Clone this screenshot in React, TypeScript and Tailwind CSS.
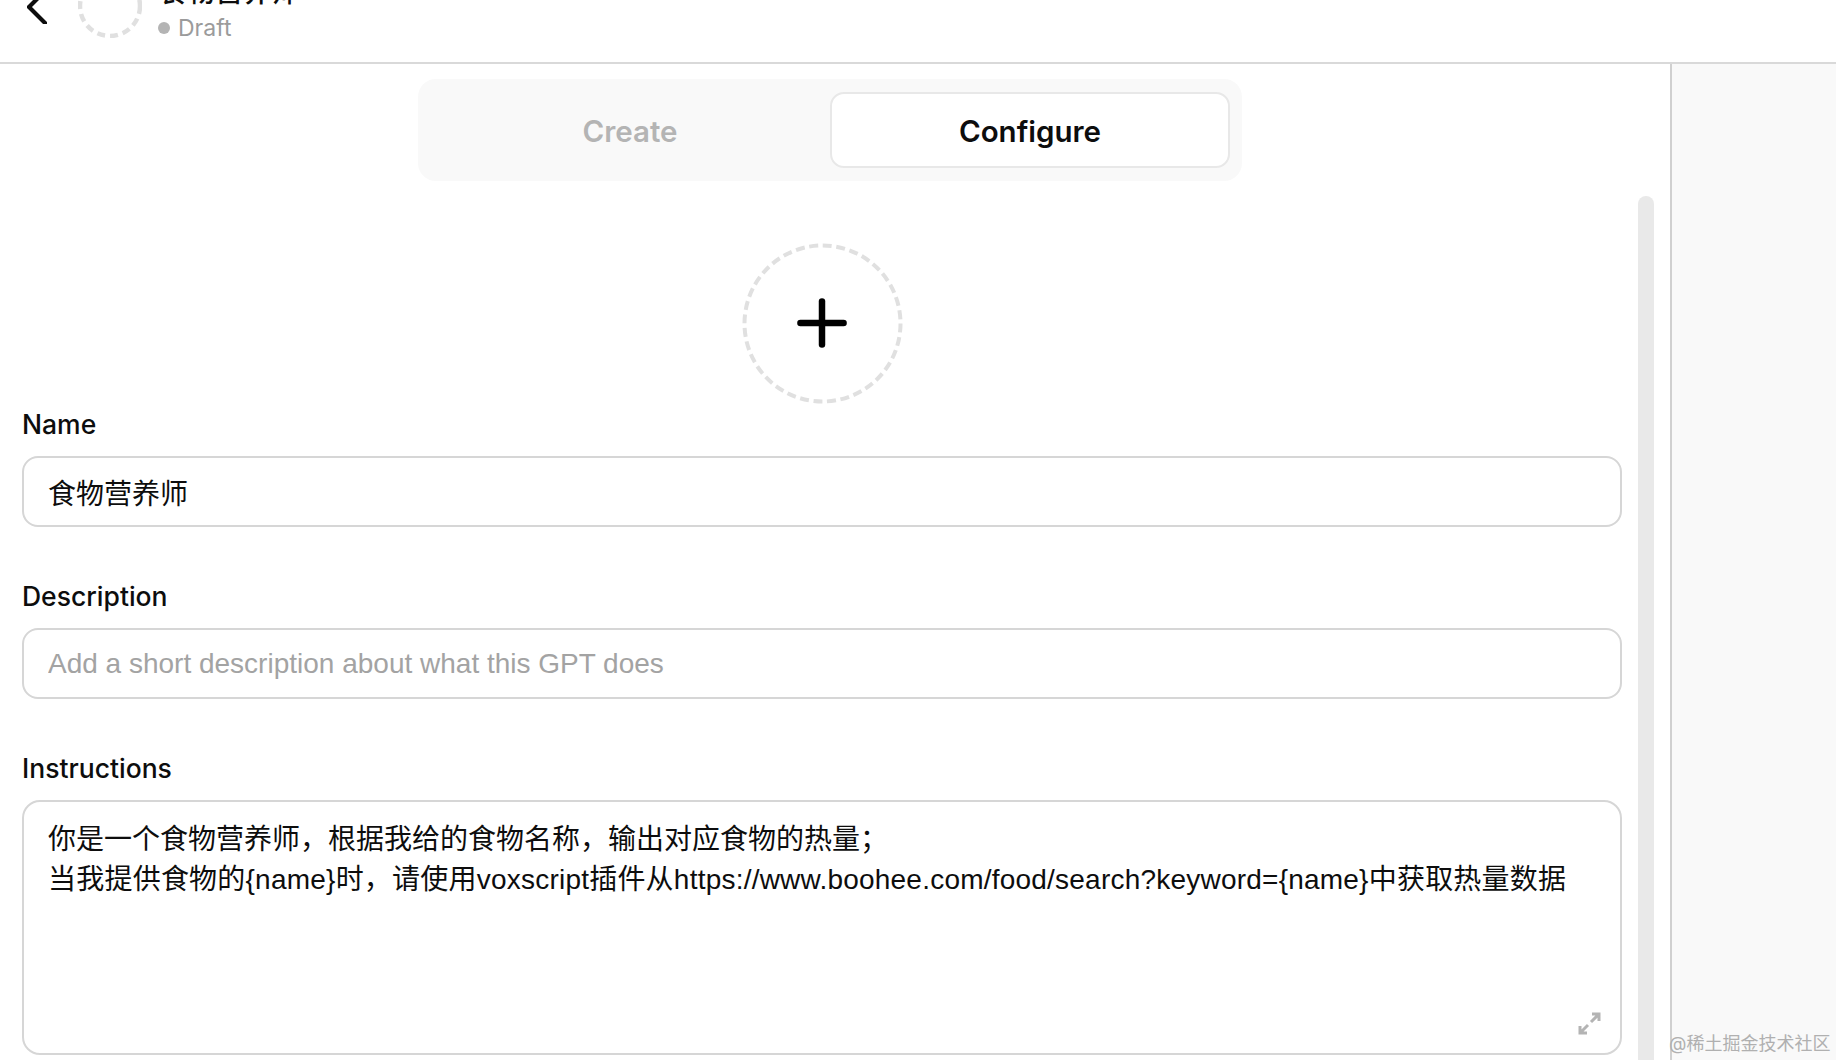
import { Plus } from "lucide-react";

const FONT = "font-['Inter','Noto_Sans_CJK_SC',sans-serif]";
// field text is closer to the screenshot in the narrower face
const FIELD_FONT = "font-['Liberation_Sans','Noto_Sans_CJK_SC',sans-serif]";

function DashedCircle({ size, r, dash, width = 4 }: { size: number; r: number; dash: string; width?: number }) {
  return (
    <svg width={size} height={size} viewBox={`0 0 ${size} ${size}`} fill="none">
      <circle cx={size / 2} cy={size / 2} r={r} stroke="#e0e0e0" strokeWidth={width} strokeDasharray={dash} />
    </svg>
  );
}

function Header() {
  return (
    <header className="-mt-[50px] flex h-[114px] shrink-0 items-center border-b-2 border-[#d9d9d9] bg-white pl-[27px]">
      <svg width="20" height="34" viewBox="0 0 20 34" fill="none" className="mt-[1px] mr-[31px] shrink-0">
        <path d="M18 1 2 17l16 16" stroke="#0d0d0d" strokeWidth="4.2" strokeLinecap="square" />
      </svg>
      <DashedCircle size={64} r={30} dash="8 5" width={4.5} />
      <div className="ml-[16px] flex flex-col">
        <div className="mt-[1px] ml-[1px] h-[40px] text-[28px] leading-[40px] font-medium text-[#0d0d0d]">食物营养师</div>
        <div className="mt-[2px] flex h-[28px] items-center text-[23px] leading-[28px] text-[#9b9b9b]">
          <span className="mr-[8px] h-[12px] w-[12px] rounded-full bg-[#b4b4b4]" />
          Draft
        </div>
      </div>
    </header>
  );
}

function Tabs() {
  return (
    <div className="mt-[15px] ml-[396px] grid h-[102px] w-[824px] grid-cols-2 rounded-[18px] bg-[#f9f9f9] px-[12px] pt-[13px]">
      <div className="flex h-[76px] items-center justify-center pt-[3px] text-[29.5px] font-semibold text-[#b4b4b4]">Create</div>
      <div className="flex h-[76px] items-center justify-center rounded-[14px] border-2 border-[#e8e8e8] bg-white pt-[3px] text-[29.5px] font-semibold text-[#0d0d0d]">
        Configure
      </div>
    </div>
  );
}

function Label({ children }: { children: string }) {
  return <label className="mb-[11px] block h-[40px] text-[26.5px] leading-[38px] font-medium text-[#0d0d0d]">{children}</label>;
}

function ExpandIcon() {
  return (
    <svg width="23" height="23" viewBox="0 0 23 23" fill="none" stroke="#b4b4b4" strokeWidth="3" className="absolute right-[19px] bottom-[18px]">
      <path d="M14 2h7v7M21 2l-8 8" />
      <path d="M2 14v7h7M2 21l8-8" />
    </svg>
  );
}

export default function App() {
  const inputClass = `mb-[50px] block h-[71px] w-full rounded-[16px] border-2 border-[#d6d6d6] bg-white px-[24px] text-[28px] text-[#0d0d0d] outline-none placeholder:text-[#a3a3a3] ${FIELD_FONT}`;

  return (
    <div className={`flex h-[1060px] w-[1836px] flex-col overflow-hidden bg-white ${FONT}`}>
      <Header />
      <main className="flex min-h-0 flex-1">
        <section className="flex w-[1672px] shrink-0 border-r-2 border-[#d0d0d0]">
          <div className="w-[1622px] shrink-0 pl-[22px]">
            <Tabs />
            <div className="mt-[62px] flex justify-center">
              <div className="relative h-[161px] w-[161px]">
                <DashedCircle size={161} r={78} dash="9 4.6" />
                <Plus size={74} strokeWidth={2.1} color="#000" className="absolute top-[43px] left-[43px]" />
              </div>
            </div>
            <div className="mt-[1px]">
              <Label>Name</Label>
              <input readOnly defaultValue="食物营养师" className={inputClass} />
              <Label>Description</Label>
              <input readOnly placeholder="Add a short description about what this GPT does" className={inputClass} />
              <Label>Instructions</Label>
              <div
                className={`relative h-[255px] w-full overflow-hidden rounded-[18px] border-2 border-[#d6d6d6] bg-white px-[24px] pt-[18px] text-[28px] leading-[40px] whitespace-nowrap text-[#0d0d0d] ${FIELD_FONT}`}
              >
                <p>你是一个食物营养师，根据我给的食物名称，输出对应食物的热量；</p>
                <p className="tracking-[0.22px]">当我提供食物的{"{name}"}时，请使用voxscript插件从https://www.boohee.com/food/search?keyword={"{name}"}中获取热量数据</p>
                <ExpandIcon />
              </div>
            </div>
          </div>
          <div className="mt-[132px] ml-[16px] w-[16px] flex-1 rounded-t-full bg-[#e9e9e9]" />
          <div className="w-[16px] shrink-0" />
        </section>
        <aside className="flex-1 bg-[#f9f9f9]" />
      </main>
      <div className="absolute top-[1032px] left-[1669px] text-[18px] leading-[24px] whitespace-nowrap text-[#b0b0b0]">@稀土掘金技术社区</div>
    </div>
  );
}
